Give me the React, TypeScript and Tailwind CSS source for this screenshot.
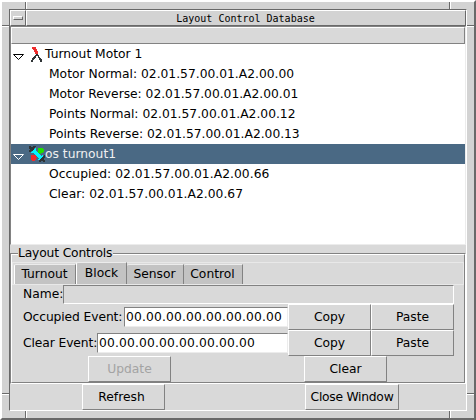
import React from 'react';

const raised = 'border border-t-white border-l-white border-r-[#828282] border-b-[#828282] bg-[#d9d9d9]';
const sunken = 'border border-t-[#828282] border-l-[#828282] border-r-[#ececec] border-b-[#ececec]';

function Button({ label, className, disabled }: { label: string; className: string; disabled?: boolean }) {
  return (
    <button
      className={`h-[26px] shrink-0 text-center leading-[24px] ${raised} ${disabled ? 'text-[#a3a3a3]' : 'text-black'} ${className}`}
    >
      {label}
    </button>
  );
}

function Arrow({ color }: { color: string }) {
  return (
    <svg className="ml-[2px] mt-[9px] h-[8px] w-[11px] shrink-0" viewBox="0 0 11 8">
      <path d="M0.5 1.5H10.5L5.5 6.5Z" fill="none" stroke={color} />
    </svg>
  );
}

function TurnoutIcon() {
  return (
    <svg className="ml-[5px] mt-[2px] h-[16px] w-[16px] shrink-0" viewBox="0 0 16 16" shapeRendering="crispEdges">
      <path d="M3 1H7V3H8V5H9V7H9V8H6V6H5V4H4V3H3Z" fill="#ee2c2c" />
      <path
        d="M7 8H9V9H10V11H11V12H12V13H13V16H11V14H10V12H9V10H7V12H6V13H5V14H4V16H2V14H3V12H4V11H5V10H6V9H7Z"
        fill="#2f3436"
      />
    </svg>
  );
}

function BlockIcon() {
  return (
    <svg className="ml-[5px] mt-[2px] h-[16px] w-[16px] shrink-0" viewBox="0 0 16 16" shapeRendering="crispEdges">
      <path d="M0 0.5L6 6.5M0 6L6 0M10 16L16 10M10 10L16 16" stroke="#2f3436" strokeWidth="2.4" fill="none" />
      <path d="M4.5 4.5L12 12" stroke="#00f5ff" strokeWidth="4" />
      <path d="M2.5 7L7 2.5M9.5 14L14 9.5" stroke="#00f5ff" strokeWidth="2" />
      <circle cx="11.7" cy="4.6" r="3" fill="#22dd00" />
      <circle cx="4.6" cy="11.7" r="3" fill="#ee2c2c" />
    </svg>
  );
}

function Leaf({ text, className = '' }: { text: string; className?: string }) {
  return <div className={`h-5 pl-[38px] leading-[20px] ${className}`}>{text}</div>;
}

function Entry({ value }: { value: string }) {
  return (
    <div className={`mt-[3px] h-5 flex-1 bg-white pl-px leading-[18px] tracking-[0.15px] ${sunken}`}>{value}</div>
  );
}

function EventRow({ label, labelWidth, value }: { label: string; labelWidth: string; value: string }) {
  return (
    <div className="flex h-[26px] pl-[11px]">
      <div className="flex w-[265px]">
        <div className={`shrink-0 leading-[26px] ${labelWidth}`}>{label}</div>
        <Entry value={value} />
      </div>
      <Button label="Copy" className="w-[83px]" />
      <Button label="Paste" className="w-[83px]" />
    </div>
  );
}

const tab = 'h-[20px] rounded-tl-[2px] border-t border-r border-t-[#ececec] border-r-[#828282] bg-[#c3c3c3] pr-px text-center leading-[19px]';

export default function App() {
  return (
    <div className="relative h-[420px] w-[476px] overflow-hidden whitespace-nowrap border-2 border-t-white border-l-white border-r-[#696969] border-b-[#696969] bg-[#d3d3d3] p-[7px] font-['DejaVu_Sans',sans-serif] text-[12.3px] text-black">
      <span className="absolute left-[23px] -top-0.5 h-[9px] w-0.5 border-l border-l-[#696969] bg-white" />
      <span className="absolute left-[447px] -top-0.5 h-[9px] w-0.5 border-l border-l-[#696969] bg-white" />
      <span className="absolute left-[23px] top-[409px] h-[9px] w-0.5 border-l border-l-[#696969] bg-white" />
      <span className="absolute left-[447px] top-[409px] h-[9px] w-0.5 border-l border-l-[#696969] bg-white" />
      <span className="absolute -left-0.5 top-[23px] h-0.5 w-[9px] border-t border-t-[#696969] bg-white" />
      <span className="absolute left-[465px] top-[23px] h-0.5 w-[9px] border-t border-t-[#696969] bg-white" />
      <span className="absolute -left-0.5 top-[391px] h-0.5 w-[9px] border-t border-t-[#696969] bg-white" />
      <span className="absolute left-[465px] top-[391px] h-0.5 w-[9px] border-t border-t-[#696969] bg-white" />

      <div className="flex h-[402px] w-[458px] flex-col border border-t-[#696969] border-l-[#696969] border-r-white border-b-white bg-[#d9d9d9]">
        <header className="flex h-4 shrink-0 bg-[#d3d3d3]">
          <div className="flex w-4 items-center justify-center border border-t-white border-l-white border-r-[#696969] border-b-[#696969]">
            <span className="h-1 w-[10px] border border-t-white border-l-white border-r-[#696969] border-b-[#696969]" />
          </div>
          <div className="flex-1 border border-t-white border-l-white border-r-[#696969] border-b-[#696969] pr-px text-center font-['DejaVu_Sans_Mono',monospace] text-[10px] leading-[15px]">
            Layout Control Database
          </div>
        </header>

        <section className={`h-[219px] shrink-0 bg-white ${sunken}`}>
          <div className={`h-[17px] ${raised}`} />
          <div className="flex h-5 leading-[20px]">
            <Arrow color="#000" />
            <TurnoutIcon />
            <span>Turnout Motor 1</span>
          </div>
          <Leaf text="Motor Normal: 02.01.57.00.01.A2.00.00" />
          <Leaf text="Motor Reverse: 02.01.57.00.01.A2.00.01" className="tracking-[-0.02px]" />
          <Leaf text="Points Normal: 02.01.57.00.01.A2.00.12" />
          <Leaf text="Points Reverse: 02.01.57.00.01.A2.00.13" className="tracking-[-0.02px]" />
          <div className="flex h-5 bg-[#4a6984] leading-[20px] text-[#f0f0f0]">
            <Arrow color="#fff" />
            <BlockIcon />
            <span>os turnout1</span>
          </div>
          <Leaf text="Occupied: 02.01.57.00.01.A2.00.66" className="tracking-[0.05px]" />
          <Leaf text="Clear: 02.01.57.00.01.A2.00.67" className="tracking-[0.03px]" />
        </section>

        <section className="mt-2 h-[131px] shrink-0 border border-t-[#828282] border-l-[#828282] border-r-white border-b-white">
          <div className="h-full border border-t-white border-l-white border-r-[#828282] border-b-[#828282]">
            <div className="-mt-[10px] ml-[6px] h-[17px] w-[95px] bg-[#d9d9d9] leading-[16px] tracking-[-0.15px]">
              Layout Controls
            </div>
            <div className="flex h-[23px] items-end border border-[#e8e8e8] pl-px">
              <div className={`w-[62px] border-l border-l-white ${tab}`}>Turnout</div>
              <div className="h-[22px] w-[51px] rounded-tl-[2px] border-t border-r border-l border-t-[#ececec] border-r-[#828282] border-l-white bg-[#c3c3c3] text-center leading-[20px]">
                Block
              </div>
              <div className={`w-[57px] ${tab}`}>Sensor</div>
              <div className={`w-[59px] ${tab}`}>Control</div>
            </div>
            <div className="flex h-[19px] pl-[11px]">
              <div className="w-10 leading-[19px]">Name:</div>
              <div className="h-[19px] w-[391px] border border-t-[#828282] border-l-[#828282] border-r-white border-b-white" />
            </div>
            <EventRow label="Occupied Event:" labelWidth="w-[101px] tracking-[-0.1px]" value="00.00.00.00.00.00.00.00" />
            <EventRow label="Clear Event:" labelWidth="w-[74px] tracking-[-0.1px]" value="00.00.00.00.00.00.00.00" />
            <div className="flex pl-[76px]">
              <Button label="Update" className="w-[83px]" disabled />
              <Button label="Clear" className="ml-[133px] w-[83px]" />
            </div>
          </div>
        </section>

        <footer className="flex h-[26px] shrink-0 pl-[72px]">
          <Button label="Refresh" className="w-[83px] pr-1" />
          <Button label="Close Window" className="ml-[140px] w-[94px] tracking-[-0.25px]" />
        </footer>
      </div>
    </div>
  );
}
